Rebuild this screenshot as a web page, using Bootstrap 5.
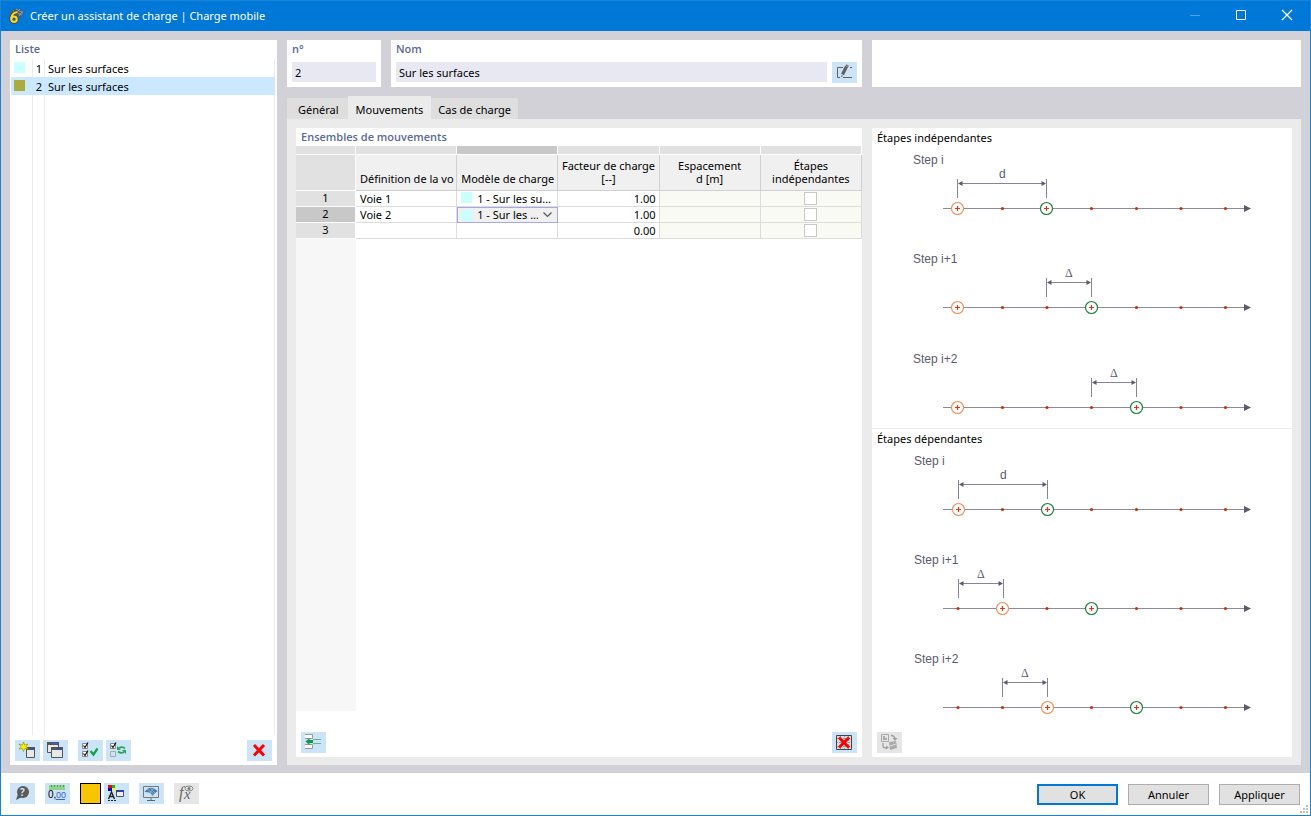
<!DOCTYPE html>
<html lang="fr">
<head>
<meta charset="utf-8">
<meta name="viewport" content="width=device-width, initial-scale=1">
<title>Créer un assistant de charge | Charge mobile</title>
<link href="https://cdn.jsdelivr.net/npm/bootstrap@5.3.0/dist/css/bootstrap.min.css" rel="stylesheet">
<style>
  body { font-family: "Noto Sans", "Open Sans", sans-serif; font-size: 11px; line-height: 16px; color: #000; }
  .win { min-height: 100vh; border: 1px solid #1883d7; }
  .titlebar { height: 30px; background: #0078d7; color: #fff; padding-left: 7px; gap: 6px; }
  .winbtns { display: flex; }
  .winbtn { width: 46px; height: 30px; }
  .work { background: #d2d1d7; padding: 9px 9px 8px; gap: 10px; }
  .sidebar { width: 267px; }
  .cap { color: #5b6b94; font-family: "Open Sans", "Noto Sans", sans-serif; font-weight: 600; height: 18px; padding: 1px 5px 0; margin: 0; font-size: 11px; line-height: 16px; }
  .entries { margin: 1px 2px 5px 1px; }
  .entry { height: 18px; border: 0; background: none; padding: 0; text-align: left; color: #000; }
  .entry.active { background: #cce8ff; }
  .c-swatch { width: 22px; border-right: 1px solid #ebebeb; padding-left: 3px; padding-top: 3px; }
  .c-num { width: 12px; border-right: 1px solid #ebebeb; text-align: right; padding: 2px 2px 0 0; }
  .c-name { border-right: 1px solid #ebebeb; padding: 2px 0 0 3px; }
  .entry.active > span { border-color: transparent; }
  .swatch { width: 11px; height: 11px; display: block; flex: none; }
  .cyan { background: #c8ffff; }
  .olive { background: #acac3c; }
  .ibtn { width: 25px; height: 21px; padding: 0; border: 0; border-radius: 0; background: #cce4f7; display: block; flex: none; }
  .ibtn:disabled { background: #e6e6e6; opacity: 1; }
  .ibtn svg, .winbtn svg { display: block; }
  .tools { padding: 0 5px 4px; }
  .group { display: flex; gap: 3px; }
  .group + .group { margin-left: 10px; }
  .field { height: 20px; border: 0; border-radius: 0; background: #e8e8f2; padding: 1px 3px 0; font-size: 11px; line-height: 16px; color: #000; min-width: 0; }
  .fieldrow { padding: 4px 5px 0; gap: 5px; }
  .heads-row { gap: 10px; }
  .head-card { height: 47px; }
  .num-card { width: 94px; }
  .side-card { width: 429px; }
  .tabs { height: 22px; border: 0; margin-top: 10px; }
  .tabs .nav-link { border: 0; border-radius: 0; margin: 0; color: #000; background: #dedede; height: 21px; padding: 2px 7px 0; line-height: 18px; }
  .tabs .nav-item:first-child .nav-link { padding-left: 11px; padding-right: 9px; }
  .tabs .nav-link.active { background: #ebebeb; color: #000; height: 23px; padding: 4px 8px 0; }
  .pane { background: #ebebeb; padding: 9px 9px 8px; gap: 10px; }
  .diagrams { width: 420px; }
  .gridbox { background: linear-gradient(to right, #f7f7f7 60px, #fff 60px); margin-bottom: 21px; }
  .sheet { table-layout: fixed; width: 100%; border-collapse: separate; border-spacing: 0; }
  .sheet .rowcol { width: 60px; }
  .sheet th, .sheet td { font-weight: 400; padding: 0; border-right: 1px solid #dcdcdc; border-bottom: 1px solid #dcdcdc; height: 16px; line-height: 14px; overflow: hidden; white-space: nowrap; background: #fff; }
  .sheet .strip td { height: 9px; line-height: 8px; background: #e1e1e1; border-color: #fff; }
  .sheet .strip td.on, .sheet tbody th.on { background: #c8c8c8; }
  .sheet .heads th { height: 36px; line-height: 13px; vertical-align: bottom; padding: 0 0 5px; text-align: center; background: #f0f0f0; border-color: #d0d0d0; }
  .sheet .heads th.start { text-align: left; padding-left: 4px; }
  .sheet .heads td { background: #e1e1e1; border-color: #fff; }
  .sheet tbody th { background: #e1e1e1; border-color: #fff; text-align: center; vertical-align: top; }
  .sheet td.txt { padding: 1px 0 0 4px; }
  .sheet td.val { padding: 1px 3px 0 0; text-align: right; }
  .sheet td.off { background: #f9faf4; vertical-align: top; }
  .sheet td.edit { border: 1px solid #a6a6ea; background: #f0f0f0; padding-left: 3px; }
  .pick { gap: 5px; }
  .model { border: 0; background: transparent; appearance: none; padding: 0; font-size: 11px; line-height: 14px; height: 14px; color: #000; width: 61px; outline: 0; }
  .sheet input.form-check-input { width: 13px; height: 13px; border: 1px solid #c8c8c8; border-radius: 0; margin: 1px auto 0; float: none; display: block; background-color: #fff; }
  .scheme { border-bottom: 1px solid #ebebeb; }
  .scheme h2 { font-size: 11px; line-height: 16px; font-weight: 400; margin: 0; height: 20px; padding: 2px 5px 0; }
  .scheme svg { display: block; }
  .scheme text { font: 12px "Liberation Sans", Arial, sans-serif; fill: #5b5b6e; }
  .scheme text.delta { font: 12px "Liberation Serif", serif; }
  .foot { height: 42px; padding: 10px 10px 0 9px; }
  .foot-tools { gap: 10px; }
  .colour { width: 21px; height: 21px; border: 1px solid #000; background: #f7c600; padding: 0; }
  .dlgs { gap: 10px; padding-top: 1px; }
  .dlg { width: 81px; height: 21px; padding: 1px 0 0; border: 1px solid #adadad; border-radius: 0; background: #e1e1e1; font-size: 11px; line-height: 18px; color: #000; }
  .dlg.main { border: 2px solid #0078d7; line-height: 16px; }
  .grip { right: 1px; bottom: 1px; }
</style>
</head>
<body>
<svg width="0" height="0" class="position-absolute" aria-hidden="true">
  <defs>
    <g id="axis">
      <path d="M71 60.500H373" stroke="#8b8b99" fill="none"/><path d="M372 57L379 60.500L372 64Z" fill="#5b5b6e"/>
      <g fill="#c83200"><circle cx="86" cy="60.500" r="1.600"/><circle cx="130.500" cy="60.500" r="1.600"/><circle cx="175" cy="60.500" r="1.600"/><circle cx="219.500" cy="60.500" r="1.600"/><circle cx="264.500" cy="60.500" r="1.600"/><circle cx="309" cy="60.500" r="1.600"/><circle cx="353.500" cy="60.500" r="1.600"/></g>
    </g>
    <g id="wheel"><circle r="6" fill="#fff" stroke-width="1.200"/><path d="M-2.500 0H2.500M0 -2.500V2.500" stroke="#d23c14" stroke-width="1.200"/></g>
    <g id="short"><path d="M.5 31V50M45.500 31V50M2 35.500H44" stroke="#858594" fill="none"/><path d="M1 35.500l4.500-2.500v5zM45 35.500l-4.500-2.500v5z" fill="#5b5b6e"/></g>
    <g id="long"><path d="M.5 31V50M89.500 31V50M2 35.500H88" stroke="#858594" fill="none"/><path d="M1 35.500l4.500-2.500v5zM89 35.500l-4.500-2.500v5z" fill="#5b5b6e"/></g>
  </defs>
</svg>

<div class="win d-flex flex-column">
  <header class="titlebar d-flex align-items-center">
    <svg width="16" height="16" viewBox="0 0 16 16" aria-hidden="true"><path d="M2 4Q8-2 15.500 3.500L12 11Q10 5 3 7Z" fill="#4b5d70"/><path d="M5 3L14 7M8 1L15 5M12 1L7 6M14.500 3L11 8" stroke="#a9b6c0" stroke-width=".7"/><path d="M9.500 4Q4 4.500 3 10.500" fill="none" stroke="#4c4210" stroke-width="3.400"/><circle cx="6" cy="11.200" r="2.800" fill="none" stroke="#4c4210" stroke-width="3.400"/><path d="M9.500 4Q4 4.500 3.200 10.500" fill="none" stroke="#ffd52e" stroke-width="2.200"/><circle cx="6" cy="11.200" r="2.700" fill="none" stroke="#ffd52e" stroke-width="2.200"/></svg>
    <span class="flex-grow-1">Créer un assistant de charge | Charge mobile</span>
    <div class="winbtns">
      <button class="btn winbtn p-0 border-0" aria-label="Réduire"><svg width="46" height="30" viewBox="0 0 46 30"><path d="M18 14.500h10" stroke="#4da1e3"/></svg></button>
      <button class="btn winbtn p-0 border-0" aria-label="Agrandir"><svg width="46" height="30" viewBox="0 0 46 30"><path d="M18.500 9.500h9v9h-9z" stroke="#fff" fill="none"/></svg></button>
      <button class="btn winbtn p-0 border-0" aria-label="Fermer"><svg width="46" height="30" viewBox="0 0 46 30"><path d="M18 9l10 10M28 9l-10 10" stroke="#fff" stroke-width="1.200"/></svg></button>
    </div>
  </header>

  <main class="work d-flex flex-grow-1">
    <aside class="sidebar bg-white d-flex flex-column flex-shrink-0">
      <h1 class="cap">Liste</h1>
      <div class="entries d-flex flex-column flex-grow-1">
        <button class="entry d-flex"><span class="c-swatch h-100"><i class="swatch cyan"></i></span><span class="c-num h-100">1</span><span class="c-name h-100 flex-grow-1">Sur les surfaces</span></button>
        <button class="entry active d-flex" aria-current="true"><span class="c-swatch h-100"><i class="swatch olive"></i></span><span class="c-num h-100">2</span><span class="c-name h-100 flex-grow-1">Sur les surfaces</span></button>
        <div class="d-flex flex-grow-1"><span class="c-swatch"></span><span class="c-num"></span><span class="c-name flex-grow-1"></span></div>
      </div>
      <div class="tools d-flex">
        <div class="group">
          <button class="ibtn" aria-label="Nouveau"><svg width="25" height="21"><path d="M11.500 7.500h8v10h-8z" fill="#e8e8e8" stroke="#555"/><path d="M11 7h9v3h-9z" fill="#555"/><path d="M15 8h4v1h-4z" fill="#2846e6"/><path d="M8.500 2l1.200 3 3.300-1-2 2.700 2.500 2.300-3.700-.5L8.500 11.500 7.300 8.500 4 9l2-2.500L4 4l3.300 1z" fill="#f8f200" stroke="#8f8600" stroke-width=".6"/></svg></button>
          <button class="ibtn" aria-label="Copier"><svg width="25" height="21"><path d="M4.500 2.500h11v10h-11z" fill="#e8e8e8" stroke="#555"/><path d="M4 2h12v3H4z" fill="#555"/><path d="M9 3h6v1H9z" fill="#3c5af0"/><path d="M8.500 7.500h11v10h-11z" fill="#e8e8e8" stroke="#555"/><path d="M8 7h12v3H8z" fill="#555"/><path d="M13 8h6v1h-6z" fill="#2846e6"/></svg></button>
        </div>
        <div class="group">
          <button class="ibtn" aria-label="Tout sélectionner"><svg width="25" height="21" fill="none"><path d="M4.500 3.500h5v5h-5zM4.500 11.500h5v5h-5z" stroke="#888" fill="#fff"/><path d="M5.500 5.500l1.500 2 3-5M5.500 13.500l1.500 2 3-5" stroke="#111" stroke-width="1.200"/><path d="M12.500 11l3 3.500 4-6" stroke="#0fa64a" stroke-width="2.300"/></svg></button>
          <button class="ibtn" aria-label="Inverser la sélection"><svg width="25" height="21" fill="none"><path d="M4.500 3.500h5v5h-5z" stroke="#888" fill="#fff"/><path d="M4.500 11.500h5v5h-5z" stroke="#aaa"/><path d="M5.500 5.500l1.500 2 3-5" stroke="#111" stroke-width="1.200"/><path d="M19 8.500q-3-2.500-6-.5M12 11.500q3 2.500 6 .5" stroke="#27a35b" stroke-width="1.800"/><path d="M11 6v4h4zM20 14v-4h-4z" fill="#27a35b"/></svg></button>
        </div>
        <button class="ibtn ms-auto" aria-label="Supprimer"><svg width="25" height="21"><path d="M7 5l10 10.500M17 5L7 15.500" stroke="#f00" stroke-width="3"/></svg></button>
      </div>
    </aside>

    <section class="d-flex flex-column flex-grow-1">
      <div class="heads-row d-flex">
        <div class="head-card num-card bg-white"><label class="cap d-block" for="num">n°</label><div class="fieldrow d-flex"><input id="num" class="field w-100" value="2"></div></div>
        <div class="head-card bg-white flex-grow-1"><label class="cap d-block" for="nom">Nom</label><div class="fieldrow d-flex"><input id="nom" class="field flex-grow-1" value="Sur les surfaces"><button class="ibtn" aria-label="Modifier le nom"><svg width="25" height="21" fill="none"><path d="M11 5.500H5.500v10H8M11 15.500h9M18 5.500h2" stroke="#606060"/><path d="M10.500 12.500l4-8" stroke="#606060" stroke-width="3.200"/><path d="M8.500 15.500l1-2.500 2 1z" fill="#888"/><path d="M14 3l2.500 1.500" stroke="#777" stroke-width="2"/></svg></button></div></div>
        <div class="head-card side-card bg-white flex-shrink-0"></div>
      </div>

      <ul class="tabs nav nav-tabs align-items-end flex-nowrap">
        <li class="nav-item"><button class="nav-link">Général</button></li>
        <li class="nav-item"><button class="nav-link active">Mouvements</button></li>
        <li class="nav-item"><button class="nav-link">Cas de charge</button></li>
      </ul>

      <div class="pane d-flex flex-grow-1">
        <div class="bg-white d-flex flex-column flex-grow-1">
          <h2 class="cap">Ensembles de mouvements</h2>
          <div class="gridbox flex-grow-1">
            <table class="sheet">
              <colgroup><col class="rowcol"><col><col><col><col><col></colgroup>
              <thead>
                <tr class="strip"><td></td><td></td><td class="on"></td><td></td><td></td><td></td></tr>
                <tr class="heads"><td></td><th class="start">Définition de la vo</th><th class="start">Modèle de charge</th><th>Facteur de charge<br>[--]</th><th>Espacement<br>d [m]</th><th>Étapes<br>indépendantes</th></tr>
              </thead>
              <tbody>
                <tr><th>1</th><td class="txt">Voie 1</td><td class="txt"><span class="pick d-flex"><i class="swatch cyan"></i>1 - Sur les su...</span></td><td class="val">1.00</td><td class="off"></td><td class="off"><input type="checkbox" class="form-check-input" aria-label="Étapes indépendantes 1"></td></tr>
                <tr><th class="on">2</th><td class="txt">Voie 2</td><td class="edit"><span class="pick d-flex align-items-center"><i class="swatch cyan"></i><select class="model" aria-label="Modèle de charge 2"><option>1 - Sur les ...</option></select><svg width="9" height="6" fill="none" aria-hidden="true"><path d="M.5.500l4 4 4-4" stroke="#555" stroke-width="1.200"/></svg></span></td><td class="val">1.00</td><td class="off"></td><td class="off"><input type="checkbox" class="form-check-input" aria-label="Étapes indépendantes 2"></td></tr>
                <tr><th>3</th><td></td><td></td><td class="val">0.00</td><td class="off"></td><td class="off"><input type="checkbox" class="form-check-input" aria-label="Étapes indépendantes 3"></td></tr>
              </tbody>
            </table>
          </div>
          <div class="tools d-flex justify-content-between">
            <button class="ibtn" aria-label="Insérer une ligne"><svg width="25" height="21" fill="none"><path d="M4 2.500h7.500v4H4M4 12.500h7.500v4H4" fill="#fff" stroke="#999"/><path d="M12 7.500h8M12 11.500h8" stroke="#63b88b"/><path d="M4.500 9.500l4-3.500v2H12v3H8.500v2z" fill="#109a48"/></svg></button>
            <button class="ibtn" aria-label="Tout supprimer"><svg width="25" height="21"><path d="M4.500 3.500h15v14h-15z" fill="#ddd" stroke="#444"/><path d="M5 6.500h14M5 10.500h14M5 14.500h14M8.500 4v13M12.500 4v13M16.500 4v13" stroke="#999" stroke-dasharray="1 1"/><path d="M7 5.500l10 10M17 5.500l-10 10" stroke="#f00" stroke-width="3"/></svg></button>
          </div>
        </div>

        <div class="diagrams bg-white d-flex flex-column flex-shrink-0">
          <section class="scheme">
            <h2>Étapes indépendantes</h2>
            <svg width="420" height="280" viewBox="0 0 420 280">
              <g><use href="#axis"/><use href="#long" x="85"/><text x="41" y="16">Step i</text><text x="127" y="30">d</text><use href="#wheel" x="85.500" y="60.500" stroke="#f0935a"/><use href="#wheel" x="174.500" y="60.500" stroke="#208043"/></g>
              <g transform="translate(0 99)"><use href="#axis"/><use href="#short" x="174"/><text x="41" y="16">Step i+1</text><text class="delta" x="193" y="30">Δ</text><use href="#wheel" x="85.500" y="60.500" stroke="#f0935a"/><use href="#wheel" x="219.500" y="60.500" stroke="#208043"/></g>
              <g transform="translate(0 199)"><use href="#axis"/><use href="#short" x="219"/><text x="41" y="16">Step i+2</text><text class="delta" x="238" y="30">Δ</text><use href="#wheel" x="85.500" y="60.500" stroke="#f0935a"/><use href="#wheel" x="264.500" y="60.500" stroke="#208043"/></g>
            </svg>
          </section>
          <section class="scheme border-0">
            <h2>Étapes dépendantes</h2>
            <svg width="420" height="280" viewBox="0 0 420 280">
              <g><use href="#axis"/><use href="#long" x="86"/><text x="42" y="16">Step i</text><text x="128" y="30">d</text><use href="#wheel" x="86.500" y="60.500" stroke="#f0935a"/><use href="#wheel" x="175.500" y="60.500" stroke="#208043"/></g>
              <g transform="translate(0 99)"><use href="#axis"/><use href="#short" x="86"/><text x="42" y="16">Step i+1</text><text class="delta" x="105" y="30">Δ</text><use href="#wheel" x="130.500" y="60.500" stroke="#f0935a"/><use href="#wheel" x="219.500" y="60.500" stroke="#208043"/></g>
              <g transform="translate(0 198)"><use href="#axis"/><use href="#short" x="130"/><text x="42" y="16">Step i+2</text><text class="delta" x="149" y="30">Δ</text><use href="#wheel" x="175.500" y="60.500" stroke="#f0935a"/><use href="#wheel" x="264.500" y="60.500" stroke="#208043"/></g>
            </svg>
          </section>
          <div class="tools mt-auto">
            <button class="ibtn" disabled aria-label="Échanger les images"><svg width="25" height="21" fill="none"><path d="M4.500 2.500h7v7h-7z" stroke="#aaa"/><path d="M6 4h2v2h2v2H6z" fill="#aaa"/><path d="M14 3.500q4 0 4 4M6 11v3q0 2 4 2" stroke="#a0a0a0" stroke-width="1.300"/><path d="M15.500 6h5L18 9zM9 13.500v4l3-2z" fill="#a0a0a0"/><path d="M12 10l7-1 1 7-7 2z" fill="#ababab"/><path d="M13 14l6-2" stroke="#ddd"/></svg></button>
          </div>
        </div>
      </div>
    </section>
  </main>

  <footer class="foot d-flex align-items-start position-relative">
    <div class="foot-tools d-flex">
      <button class="ibtn" aria-label="Aide"><svg width="25" height="21"><circle cx="13" cy="9" r="6" fill="#5a5a5a"/><path d="M8 11l-2 6 6-3z" fill="#5a5a5a"/><text x="10" y="13" font-size="10" font-weight="700" fill="#cce4f7">?</text></svg></button>
      <button class="ibtn" aria-label="Unités"><svg width="25" height="21"><path d="M4 2h16v5H4z" fill="#8ed28c"/><path d="M6.500 2v2M9.500 2v2M12.500 2v2M15.500 2v2M18.500 2v2" stroke="#559d55"/><text x="3" y="15" font-family="Liberation Sans" font-size="10" fill="#000">0,</text><text x="11" y="15" font-family="Liberation Sans" font-size="9" fill="#3264dc">00</text><path d="M11 16.500h9" stroke="#3264dc"/></svg></button>
      <div class="group">
        <button class="colour" aria-label="Couleur"></button>
        <button class="ibtn" aria-label="Affichage"><svg width="25" height="21" fill="none"><path d="M4 2h4v3H4z" fill="#f00"/><path d="M8 2h3v3H8z" fill="#00c800"/><path d="M4 5h4v3H4z" fill="#00f"/><path d="M8 5h3v3H8z" fill="#ff0"/><path d="M4.500 16l3-7 3 7M6 13.500h3" stroke="#222" stroke-width="1.400"/><path d="M4 17.500h8" stroke="#222" stroke-dasharray="2 1"/><path d="M12.500 7.500h7v6h-7z" fill="#eee" stroke="#555"/><path d="M12 7h8v2h-8z" fill="#2846a6"/></svg></button>
      </div>
      <button class="ibtn" aria-label="Vue"><svg width="25" height="21" fill="none"><path d="M4.500 3.500h15v11h-15z" stroke="#777"/><path d="M12 15v2M8 17.500h8" stroke="#666"/><path d="M5.500 9Q11 1 18.500 8L13 13q0-4-7.500-4z" fill="#4b7ca8"/><path d="M8 6l7 5M11 5l5 5M15 5l-4 5" stroke="#9fc0dc" stroke-width=".7"/></svg></button>
      <button class="ibtn" disabled aria-label="Formule"><svg width="25" height="21" fill="none"><text x="5" y="15" font-family="Liberation Serif" font-style="italic" font-size="16" fill="#666">f</text><text x="10" y="16" font-family="Liberation Serif" font-style="italic" font-size="15" fill="#666">x</text><ellipse cx="15" cy="5.500" rx="4" ry="2.500" stroke="#888"/><circle cx="15" cy="5.500" r="1.500" fill="#777"/></svg></button>
    </div>
    <div class="dlgs d-flex ms-auto"><button class="dlg main">OK</button><button class="dlg">Annuler</button><button class="dlg">Appliquer</button></div>
    <svg class="grip position-absolute" width="9" height="9" fill="#bfbfbf" aria-hidden="true"><path d="M6 0h2v2H6zM6 3h2v2H6zM6 6h2v2H6zM3 3h2v2H3zM3 6h2v2H3zM0 6h2v2H0z"/></svg>
  </footer>
</div>
<script src="https://cdn.jsdelivr.net/npm/bootstrap@5.3.0/dist/js/bootstrap.bundle.min.js"></script>
</body>
</html>
